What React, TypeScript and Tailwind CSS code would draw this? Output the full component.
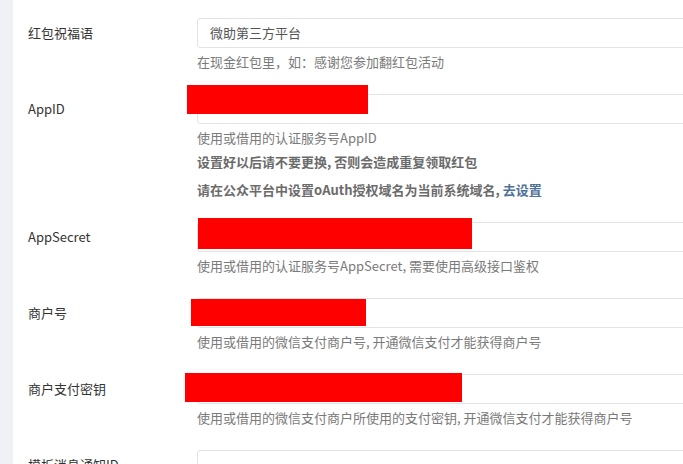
import React from "react";

const font = {
  fontFamily: '"Noto Sans CJK SC", "Microsoft YaHei", "Liberation Sans", sans-serif',
};

function Row({
  label,
  value,
  children,
}: {
  label: string;
  value?: string;
  children?: React.ReactNode;
}) {
  return (
    <div className="flex mb-[22px]">
      <div className="w-[169px] shrink-0 h-[30px] flex items-center text-[13px] text-[#333]">
        {label}
      </div>
      <div className="flex-1 min-w-0">
        <div className="h-[30px] w-[700px] border border-[#e3e3e3] rounded-[3px] bg-white flex items-center px-[12px] text-[13px] text-[#555]">
          {value}
        </div>
        {children}
      </div>
    </div>
  );
}

function Help({ children }: { children: React.ReactNode }) {
  return (
    <div className="mt-[4px] leading-[20px] text-[13px] text-[#7a7a7a] whitespace-nowrap">
      {children}
    </div>
  );
}

export default function App() {
  return (
    <div
      className="relative w-[683px] h-[464px] overflow-hidden bg-white flex"
      style={font}
    >
      <div className="w-[13px] shrink-0 bg-[#f0f1f5]" />
      <div className="flex-1 min-w-0 pl-[15px] pt-[18px]">
        <Row label="红包祝福语" value="微助第三方平台">
          <Help>在现金红包里，如：感谢您参加翻红包活动</Help>
        </Row>
        <Row label="AppID">
          <Help>使用或借用的认证服务号AppID</Help>
          <div className="mt-[4px] leading-[20px] text-[13px] font-bold text-[#6b6b6b] whitespace-nowrap">
            设置好以后请不要更换, 否则会造成重复领取红包
          </div>
          <div className="mt-[8px] leading-[20px] text-[13px] font-bold text-[#6b6b6b] whitespace-nowrap">
            请在公众平台中设置oAuth授权域名为当前系统域名,{" "}
            <span className="text-[#4f7199]">去设置</span>
          </div>
        </Row>
        <Row label="AppSecret">
          <Help>使用或借用的认证服务号AppSecret, 需要使用高级接口鉴权</Help>
        </Row>
        <Row label="商户号">
          <Help>使用或借用的微信支付商户号, 开通微信支付才能获得商户号</Help>
        </Row>
        <Row label="商户支付密钥">
          <Help>
            使用或借用的微信支付商户所使用的支付密钥, 开通微信支付才能获得商户号
          </Help>
        </Row>
        <Row label="模板消息通知ID" />
      </div>

      {/* redaction overlays */}
      <div className="absolute left-[187px] top-[85px] w-[181px] h-[29px] bg-[#ff0000]" />
      <div className="absolute left-[198px] top-[218px] w-[274px] h-[31px] bg-[#ff0000]" />
      <div className="absolute left-[191px] top-[299px] w-[175px] h-[27px] bg-[#ff0000]" />
      <div className="absolute left-[185px] top-[373px] w-[277px] h-[29px] bg-[#ff0000]" />
    </div>
  );
}
